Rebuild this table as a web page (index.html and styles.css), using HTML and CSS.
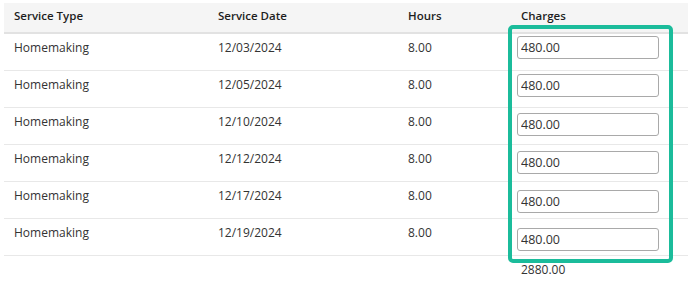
FILE: index.html
```html
<!DOCTYPE html>
<html>
<head>
<meta charset="utf-8">
<link rel="stylesheet" href="styles.css">
</head>
<body>
<div class="wrap">
  <table class="grid">
    <thead>
      <tr>
        <th class="c1">Service Type</th>
        <th class="c2">Service Date</th>
        <th class="c3">Hours</th>
        <th class="c4">Charges</th>
      </tr>
    </thead>
    <tbody>
      <tr><td>Homemaking</td><td>12/03/2024</td><td>8.00</td><td class="inp"><input type="text" value="480.00"></td></tr>
      <tr><td>Homemaking</td><td>12/05/2024</td><td>8.00</td><td class="inp"><input type="text" value="480.00"></td></tr>
      <tr><td>Homemaking</td><td>12/10/2024</td><td>8.00</td><td class="inp"><input type="text" value="480.00"></td></tr>
      <tr><td>Homemaking</td><td>12/12/2024</td><td>8.00</td><td class="inp"><input type="text" value="480.00"></td></tr>
      <tr><td>Homemaking</td><td>12/17/2024</td><td>8.00</td><td class="inp"><input type="text" value="480.00"></td></tr>
      <tr><td>Homemaking</td><td>12/19/2024</td><td>8.00</td><td class="inp"><input type="text" value="480.00"></td></tr>
    </tbody>
    <tfoot>
      <tr><td></td><td></td><td></td><td class="total">2880.00</td></tr>
    </tfoot>
  </table>
  <div class="highlight"></div>
</div>
</body>
</html>
```
FILE: styles.css
```css
html, body {
  margin: 0;
  padding: 0;
  background: #fff;
}
body {
  font-family: "Open Sans", "Liberation Sans", sans-serif;
  font-size: 12px;
  line-height: 16px;
  color: #333;
}
.wrap {
  position: relative;
  padding: 3px 0 0 4px;
}
.grid {
  width: 684px;
  border-collapse: collapse;
  table-layout: fixed;
}
.grid th {
  background: #f5f5f5;
  font-weight: 600;
  font-size: 11.5px;
  color: #1e1e1e;
  text-align: left;
  height: 25px;
  padding: 0 0 4px 10px;
  border-bottom: 2px solid #e2e2e2;
  vertical-align: middle;
}
.grid .c1 { width: 194px; }
.grid .c2 { width: 180px; }
.grid .c3 { width: 103px; }
.grid td {
  height: 30px;
  padding: 6px 0 0 10px;
  border-bottom: 1px solid #e8e8e8;
  vertical-align: top;
}
.grid td.inp {
  padding: 2px 0 0 6px;
  height: 34px;
}
.grid tbody tr:nth-child(2) td.inp { padding-top: 3px; height: 33px; }
.grid tbody tr:nth-child(3) td.inp { padding-top: 5px; height: 31px; }
.grid tbody tr:nth-child(4) td.inp { padding-top: 6px; height: 30px; }
.grid tbody tr:nth-child(5) td.inp { padding-top: 8px; height: 28px; }
.grid tbody tr:nth-child(6) td.inp { padding-top: 9px; height: 27px; }
.grid input {
  display: block;
  box-sizing: border-box;
  width: 142px;
  height: 23px;
  margin: 0;
  padding: 0 0 0 3px;
  border: 1px solid #a9a9a9;
  border-radius: 3px;
  font-family: "Open Sans", "Liberation Sans", sans-serif;
  font-size: 12.5px;
  color: #333;
  background: #fff;
}
.grid tfoot td {
  border-bottom: none;
  height: 30px;
  padding-top: 6px;
}
.highlight {
  position: absolute;
  left: 508px;
  top: 25px;
  width: 157px;
  height: 230px;
  border: 4px solid #1bbc9b;
  border-radius: 5px;
  pointer-events: none;
}
```
